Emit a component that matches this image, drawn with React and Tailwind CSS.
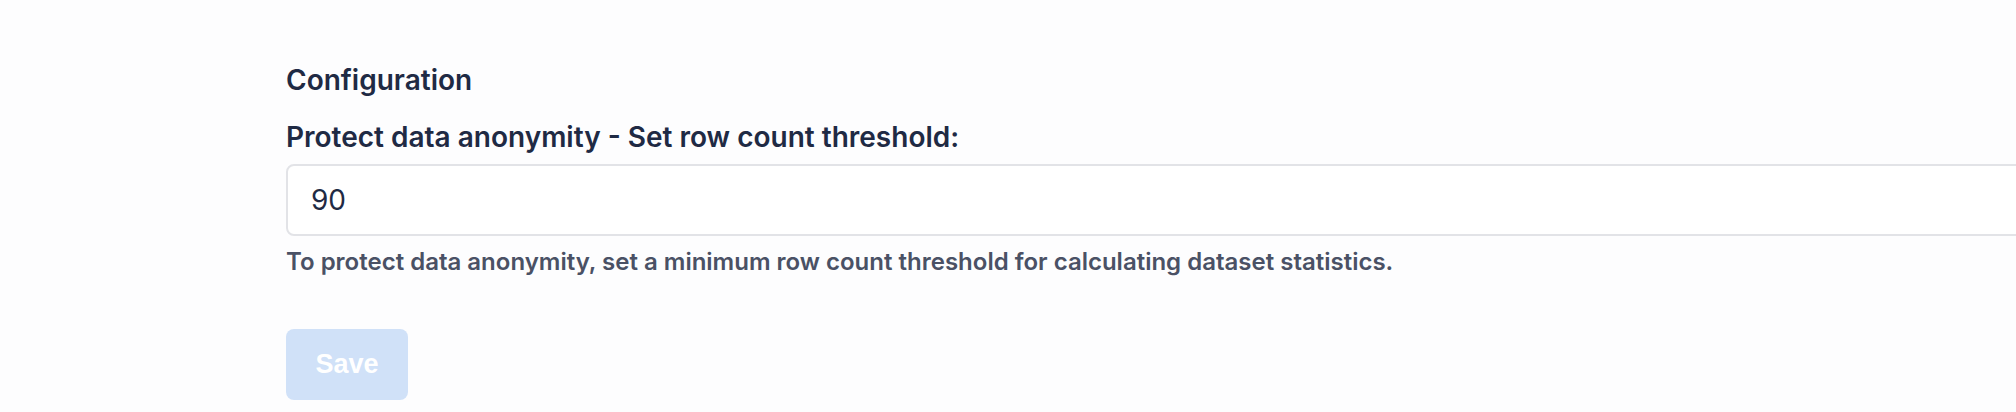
import React, { useState } from 'react';

const App = () => {
  const [threshold, setThreshold] = useState('90');

  return (
    <div className="w-screen min-h-screen overflow-hidden bg-[#fdfdfe] font-['Inter',sans-serif]">
      <div className="pl-[286px] pt-[59px] w-[2100px]">
        <h2 className="text-[28px] leading-[42px] font-semibold text-[#1f2a44]">Configuration</h2>
        <label className="block mt-[15px] text-[28px] leading-[42px] font-semibold text-[#1f2a44]">
          Protect data anonymity - Set row count threshold:
        </label>
        <input
          type="text"
          value={threshold}
          onChange={(e) => setThreshold(e.target.value)}
          className="block mt-[6px] w-full h-[72px] px-[23px] text-[28px] text-[#1f2a44] bg-white border-2 border-[#e2e3e7] rounded-[8px] outline-none"
        />
        <p className="mt-[8px] text-[24px] leading-[36px] font-semibold text-[#4a5165]">
          To protect data anonymity, set a minimum row count threshold for calculating dataset statistics.
        </p>
        {/* disabled until value changes */}
        <button
          disabled
          className="mt-[49px] w-[122px] h-[71px] rounded-[8px] bg-[#d0e1f8] text-white text-[27px] font-bold font-['Liberation_Sans',Arial,sans-serif]"
        >
          Save
        </button>
      </div>
    </div>
  );
};

export default App;
